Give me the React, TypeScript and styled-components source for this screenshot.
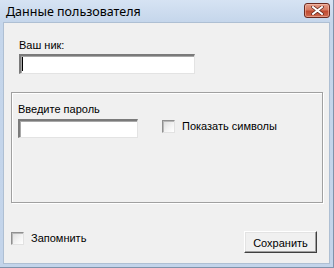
import React from 'react'
import styled, { createGlobalStyle } from 'styled-components'

const GlobalStyle = createGlobalStyle`
  html, body {
    margin: 0;
    padding: 0;
    background: #c8d7ea;
  }
  * {
    box-sizing: border-box;
  }
`

const App: React.FC = () => {
  return (
    <>
      <GlobalStyle />
      <Window>
        <TitleBar>
          <Title>Данные пользователя</Title>
          <CloseButton>
            <svg width="13" height="9" viewBox="0 0 13 9">
              <path d="M2 1 L11 8 M11 1 L2 8" stroke="#5a2118" strokeWidth="3.4" strokeLinecap="square" />
              <path d="M2 1 L11 8 M11 1 L2 8" stroke="#fff" strokeWidth="2" strokeLinecap="square" />
            </svg>
          </CloseButton>
        </TitleBar>
        <Client>
          <NickField>
            <Label>Ваш ник:</Label>
            <TextBox $width={176} $height={20}>
              <Caret />
            </TextBox>
          </NickField>
          <GroupBox>
            <Label>Введите пароль</Label>
            <PasswordRow>
              <TextBox $width={120} $height={19} />
              <CheckItem $offset={1}>
                <CheckBox />
                <span>Показать символы</span>
              </CheckItem>
            </PasswordRow>
          </GroupBox>
          <Footer>
            <CheckItem $offset={1}>
              <CheckBox />
              <span>Запомнить</span>
            </CheckItem>
            <Button>Сохранить</Button>
          </Footer>
        </Client>
      </Window>
    </>
  )
}

export default App

const Window = styled.div`
  width: 334px;
  height: 268px;
  display: flex;
  flex-direction: column;
  background: linear-gradient(to bottom, #d6e3f3 0px, #c5d6eb 22px, #c3d4ea 100%);
  border-right: 1px solid #7f93ab;
  border-bottom: 1px solid #7f93ab;
`

const TitleBar = styled.div`
  height: 22px;
  flex: none;
  display: flex;
  align-items: center;
  justify-content: space-between;
  padding: 0 3px 0 6px;
`

const Title = styled.div`
  font-family: 'Noto Sans', 'Liberation Sans', sans-serif;
  font-size: 12.5px;
  color: #000;
  margin-top: 1px;
`

const CloseButton = styled.div`
  width: 26px;
  height: 15px;
  margin-top: -1px;
  display: flex;
  align-items: center;
  justify-content: center;
  border: 1px solid #6b2a20;
  border-radius: 3px;
  background: linear-gradient(to bottom, #e49c88 0%, #d67a62 45%, #c04a30 55%, #cf6a50 100%);
  box-shadow: inset 0 0 0 1px rgba(255, 210, 195, 0.45);
`

const Client = styled.div`
  flex: 1;
  margin: 0 3px 3px 3px;
  background: #f0f0f0;
  border: 1px solid #aebfd3;
  display: flex;
  flex-direction: column;
  font-family: 'Liberation Sans', Arial, sans-serif;
  font-size: 11px;
  color: #000;
`

const NickField = styled.div`
  display: flex;
  flex-direction: column;
  gap: 2px;
  padding: 16px 0 0 15px;
`

const Label = styled.div`
  line-height: 13px;
  height: 13px;
`

const TextBox = styled.div<{ $width: number; $height: number }>`
  position: relative;
  width: ${p => p.$width}px;
  height: ${p => p.$height}px;
  background: #fff;
  border-style: solid;
  border-width: 2px 1px 1px 2px;
  border-color: #7a7a7a #e3e3e3 #e3e3e3 #7a7a7a;
  box-shadow: inset 1px 1px 0 #a8a8a8;
`

const Caret = styled.span`
  position: absolute;
  left: 1px;
  top: 1px;
  width: 1px;
  height: 14px;
  background: #000;
`

const GroupBox = styled.div`
  margin: 18px 6px 0 7px;
  height: 111px;
  border: 1px solid #a0a0a0;
  box-shadow: inset 1px 1px 0 #fff, 1px 1px 0 #fff;
  padding: 10px 0 0 6px;
  display: flex;
  flex-direction: column;
  gap: 3px;
`

const PasswordRow = styled.div`
  display: flex;
  align-items: flex-start;
  gap: 24px;
`

const CheckItem = styled.label<{ $offset: number }>`
  display: flex;
  align-items: center;
  gap: 7px;
  margin-top: ${p => p.$offset}px;
  line-height: 13px;
`

const CheckBox = styled.span`
  width: 13px;
  height: 13px;
  flex: none;
  border-style: solid;
  border-width: 1px;
  border-color: #8f8f8f #e2e2e2 #e2e2e2 #8f8f8f;
  background: linear-gradient(135deg, #dcdcdc 0%, #f4f4f4 60%, #ffffff 100%);
  box-shadow: inset 1px 1px 0 #b8b8b8;
`

const Footer = styled.div`
  margin-top: auto;
  display: flex;
  align-items: flex-start;
  justify-content: space-between;
  padding: 0 12px 10px 7px;
`

const Button = styled.div`
  width: 73px;
  height: 22px;
  display: flex;
  align-items: center;
  justify-content: center;
  background: #f0f0f0;
  border-style: solid;
  border-width: 1px;
  border-color: #ffffff #404040 #404040 #ffffff;
  box-shadow: inset -1px -1px 0 #a0a0a0, inset 1px 1px 0 #e3e3e3;
  padding-top: 1px;
`
